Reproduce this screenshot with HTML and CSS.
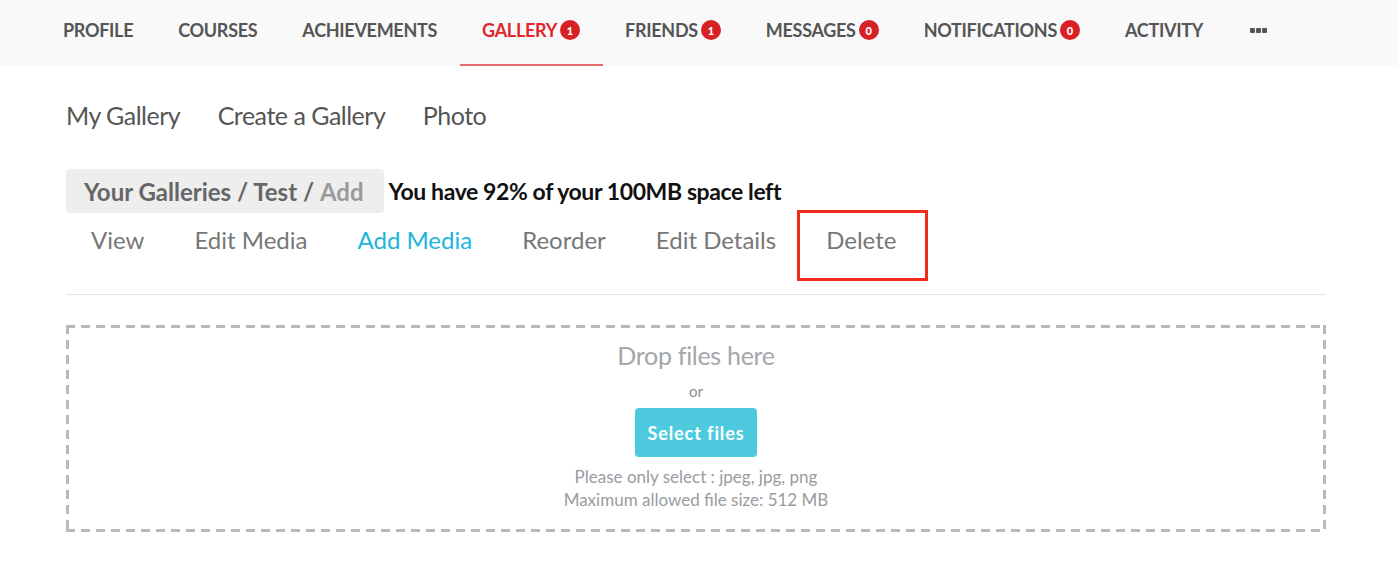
FILE: index.html
```html
<!DOCTYPE html>
<html>
<head>
<meta charset="utf-8">
<link rel="stylesheet" href="styles.css">
</head>
<body>
<nav class="topnav">
  <a class="nav-item">PROFILE</a>
  <a class="nav-item">COURSES</a>
  <a class="nav-item">ACHIEVEMENTS</a>
  <a class="nav-item active">GALLERY<span class="badge">1</span></a>
  <a class="nav-item">FRIENDS<span class="badge">1</span></a>
  <a class="nav-item">MESSAGES<span class="badge">0</span></a>
  <a class="nav-item">NOTIFICATIONS<span class="badge">0</span></a>
  <a class="nav-item">ACTIVITY</a>
  <a class="nav-item more"><span class="dot"></span><span class="dot"></span><span class="dot"></span></a>
</nav>
<main class="content">
  <div class="subnav">
    <a>My Gallery</a>
    <a>Create a Gallery</a>
    <a>Photo</a>
  </div>
  <div class="crumbrow">
    <div class="crumb">Your Galleries / Test / <span class="crumb-current">Add</span></div>
    <div class="space">You have 92% of your 100MB space left</div>
  </div>
  <div class="tabs">
    <a class="tab">View</a>
    <a class="tab">Edit Media</a>
    <a class="tab active">Add Media</a>
    <a class="tab">Reorder</a>
    <a class="tab">Edit Details</a>
    <a class="tab highlight">Delete</a>
  </div>
  <div class="dropzone">
    <div class="drop-title">Drop files here</div>
    <div class="drop-or">or</div>
    <button class="select-btn">Select files</button>
    <div class="drop-note">Please only select : jpeg, jpg, png</div>
    <div class="drop-note">Maximum allowed file size: 512 MB</div>
  </div>
</main>
</body>
</html>
```
FILE: styles.css
```css
html, body {
  margin: 0;
  padding: 0;
  background: #fff;
  font-family: Lato, "Open Sans", sans-serif;
}
a { cursor: pointer; }

.topnav {
  display: flex;
  align-items: stretch;
  height: 66px;
  background: #f9f9f9;
  padding-left: 40.5px;
  box-sizing: border-box;
}
.nav-item {
  display: flex;
  align-items: center;
  padding: 0 22.5px 4px;
  font-size: 18px;
  font-weight: 700;
  color: #555;
  letter-spacing: -0.3px;
  border-bottom: 2px solid transparent;
  box-sizing: border-box;
}
.nav-item.active {
  color: #e1262d;
  border-bottom-color: #e5686c;
}
.badge {
  display: inline-flex;
  align-items: center;
  justify-content: center;
  width: 20px;
  height: 20px;
  border-radius: 50%;
  background: #d92024;
  color: #fff;
  font-size: 11px;
  font-weight: 900;
  margin-left: 3px;
  letter-spacing: 0;
}
.nav-item.more {
  gap: 1px;
  padding-left: 24px;
}
.dot {
  width: 5px;
  height: 5px;
  background: #555;
  border-radius: 1px;
}

.content {
  margin: 0 72px 0 66px;
}
.subnav {
  display: flex;
  gap: 37.5px;
  padding-top: 32px;
  height: 34px;
  align-items: center;
}
.subnav a {
  font-size: 25px;
  color: #555;
  letter-spacing: -0.5px;
}

.crumbrow {
  display: flex;
  align-items: center;
  margin-top: 37px;
}
.crumb {
  background: #eeeeee;
  border-radius: 4px;
  height: 44px;
  display: flex;
  align-items: center;
  padding: 0 20px 0 18px;
  font-size: 24px;
  font-weight: 700;
  color: #666;
  letter-spacing: 0;
  box-sizing: border-box;
  white-space: pre;
}
.crumb-current {
  color: #9a9a9a;
}
.space {
  margin-left: 5px;
  font-size: 23px;
  font-weight: 700;
  color: #111;
  letter-spacing: -0.4px;
}

.tabs {
  display: flex;
  height: 81px;
  border-bottom: 1px solid #e5e5e5;
  align-items: flex-start;
}
.tab {
  position: relative;
  padding: 12px 25px 0;
  font-size: 24px;
  color: #777;
  letter-spacing: 0;
}
.tab.active { color: #1cb5dc; }
.tab.highlight::after {
  content: "";
  position: absolute;
  left: -4px;
  right: -7px;
  top: -3px;
  height: 71px;
  border: 3px solid #f2291f;
  box-sizing: border-box;
}

.dropzone {
  margin-top: 30px;
  height: 207px;
  box-sizing: border-box;
  display: flex;
  flex-direction: column;
  align-items: center;
  padding-top: 16px;
  background:
    repeating-linear-gradient(to right, #b6b9bd 0 9px, transparent 9px 15px) left top / 100% 3px no-repeat,
    repeating-linear-gradient(to right, #b6b9bd 0 9px, transparent 9px 15px) left bottom / 100% 3px no-repeat,
    repeating-linear-gradient(to bottom, #b6b9bd 0 9px, transparent 9px 15px) left top / 3px 100% no-repeat,
    repeating-linear-gradient(to bottom, #b6b9bd 0 9px, transparent 9px 15px) right top / 3px 100% no-repeat;
}
.drop-title {
  font-size: 25px;
  color: #a3a6aa;
  letter-spacing: -0.3px;
  line-height: 28px;
}
.drop-or {
  margin-top: 13px;
  font-size: 15px;
  color: #8a8d90;
  line-height: 18px;
}
.select-btn {
  margin-top: 8px;
  width: 122px;
  height: 49px;
  border: none;
  border-radius: 4px;
  background: #4ecadf;
  color: #fff;
  font-family: Lato, sans-serif;
  font-weight: 700;
  font-size: 18px;
  letter-spacing: 0.9px;
}
.drop-note {
  font-size: 17px;
  color: #999c9f;
  line-height: 23px;
  letter-spacing: 0;
}
.select-btn + .drop-note { margin-top: 8px; }
```
